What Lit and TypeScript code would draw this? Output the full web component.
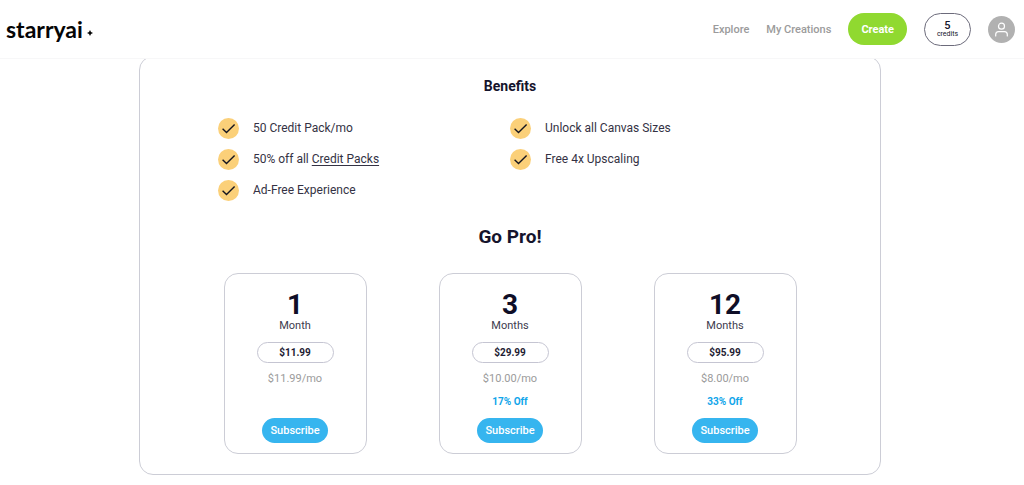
import { LitElement, html, css, svg, nothing } from "lit";
import { customElement, property } from "lit/decorators.js";

interface Plan {
  count: number;
  unit: string;
  price: string;
  monthly: string;
  discount?: string;
}

const plans: Plan[] = [
  { count: 1, unit: "Month", price: "$11.99", monthly: "$11.99/mo" },
  { count: 3, unit: "Months", price: "$29.99", monthly: "$10.00/mo", discount: "17% Off" },
  { count: 12, unit: "Months", price: "$95.99", monthly: "$8.00/mo", discount: "33% Off" },
];

const benefitColumns = [
  [html`50 Credit Pack/mo`, html`50% off all <a href="#credit-packs">Credit Packs</a>`, html`Ad-Free Experience`],
  [html`Unlock all Canvas Sizes`, html`Free 4x Upscaling`],
];

const checkIcon = html`<svg class="check" viewBox="0 0 21 21" aria-hidden="true">
  ${svg`<circle cx="10.5" cy="10.5" r="10.5" fill="#fbd079"/>
  <path d="M4.6 10.8 8.5 14.6 16.6 6.6" fill="none" stroke="#15151f" stroke-width="1.4"/>`}
</svg>`;

@customElement("site-header")
export class SiteHeader extends LitElement {
  static styles = css`
    :host {
      display: block;
      position: sticky;
      top: 0;
      z-index: 1;
    }
    .bar {
      display: flex;
      align-items: center;
      justify-content: space-between;
      height: 58px;
      padding: 0 9px 0 6px;
      background: #fff;
      border-bottom: 1px solid #f7f7f8;
    }
    .logo {
      display: flex;
      align-items: center;
      gap: 4px;
      color: #050505;
      font: 700 23px/28px Lato, sans-serif;
      text-decoration: none;
    }
    .spark {
      width: 6px;
      height: 6px;
      margin-top: 8px;
    }
    .nav {
      display: flex;
      align-items: center;
      gap: 17px;
    }
    .link {
      color: #9b9b9b;
      font-size: 11px;
      font-weight: 500;
      text-decoration: none;
    }
    .create {
      height: 32px;
      padding: 1px 13px 0;
      border: 0;
      border-radius: 16px;
      background: #90d930;
      color: #fff;
      font: 700 11px/16px Roboto, sans-serif;
    }
    .credits {
      display: flex;
      flex-direction: column;
      align-items: center;
      justify-content: center;
      box-sizing: border-box;
      width: 47px;
      height: 33px;
      padding: 0;
      border: 1px solid #6c6b7b;
      border-radius: 17px;
      background: #fff;
      color: #15142a;
      font: 500 11px/11px Roboto, sans-serif;
    }
    .unit {
      font-size: 7px;
      font-weight: 400;
      line-height: 7px;
    }
    .profile {
      width: 27px;
      height: 27px;
      padding: 0;
      border: 0;
      border-radius: 50%;
      background: none;
    }
    .avatar {
      display: block;
      width: 100%;
    }
  `;

  render() {
    return html`<header class="bar">
      <a class="logo" href="#home">starryai<svg class="spark" viewBox="0 0 6 6" aria-hidden="true"><path d="M3 0 4 2 6 3 4 4 3 6 2 4 0 3 2 2Z" fill="#050505"/></svg></a>
      <nav class="nav">
        <a class="link" href="#explore">Explore</a>
        <a class="link" href="#creations">My Creations</a>
        <button class="create" type="button">Create</button>
        <button class="credits" type="button">5<span class="unit">credits</span></button>
        <button class="profile" type="button" aria-label="Account">
          <svg class="avatar" viewBox="0 0 27 27" aria-hidden="true">
            <circle cx="13.5" cy="13.5" r="13.5" fill="#b1b1b1"/>
            <g fill="none" stroke="#fff" stroke-width="1.2" stroke-linecap="round">
              <circle cx="13.5" cy="10.2" r="3"/>
              <path d="M7.7 20V18.5Q7.7 15.6 10.6 15.6H16.4Q19.3 15.6 19.3 18.5V20"/>
            </g>
          </svg>
        </button>
      </nav>
    </header>`;
  }
}

@customElement("plan-card")
export class PlanCard extends LitElement {
  @property({ attribute: false }) plan!: Plan;

  static styles = css`
    :host {
      display: block;
    }
    .card {
      display: flex;
      flex-direction: column;
      align-items: center;
      box-sizing: border-box;
      height: 100%;
      padding: 17px 32px 10px;
      border: 1px solid #cccdd6;
      border-radius: 14px;
      font-size: 11px;
      line-height: 14px;
    }
    .count {
      margin: 0;
      color: #0f0e27;
      font-size: 28px;
      font-weight: 700;
      line-height: 28px;
    }
    .unit {
      margin-bottom: 9px;
      color: #3d3b4d;
    }
    .price {
      align-self: stretch;
      border: 1px solid #c5c5d2;
      border-radius: 11px;
      color: #1e1c33;
      font-size: 10px;
      font-weight: 700;
      line-height: 19px;
      text-align: center;
    }
    .monthly {
      margin-top: 9px;
      color: #9b9b9b;
    }
    .discount {
      min-height: 14px;
      margin: 9px 0;
      color: #10a5ea;
      font-size: 10px;
      font-weight: 700;
    }
    .subscribe {
      height: 25px;
      padding: 0 8px;
      border: 0;
      border-radius: 13px;
      background: #36b5ef;
      color: #fff;
      font: 500 11px/14px Roboto, sans-serif;
    }
  `;

  render() {
    const { count, unit, price, monthly, discount } = this.plan;
    return html`<article class="card">
      <h3 class="count">${count}</h3>
      <span class="unit">${unit}</span>
      <span class="price">${price}</span>
      <span class="monthly">${monthly}</span>
      <span class="discount">${discount ?? nothing}</span>
      <button class="subscribe" type="button">Subscribe</button>
    </article>`;
  }
}

@customElement("app-root")
export class AppRoot extends LitElement {
  static styles = css`
    :host {
      display: block;
      background: #fff;
      color: #343244;
      font-family: Roboto, sans-serif;
    }
    .page {
      margin-top: -3px;
      padding: 0 18px 10px 14px;
    }
    .panel {
      box-sizing: border-box;
      max-width: 742px;
      margin: 0 auto;
      padding: 20px 40px;
      border: 1px solid #cccdd6;
      border-radius: 14px;
    }
    .title,
    .offer {
      margin: 0;
      color: #15142c;
      font-weight: 700;
      text-align: center;
    }
    .title {
      font-size: 14px;
      line-height: 18px;
    }
    .offer {
      margin: 23px 0;
      font-size: 19px;
      line-height: 26px;
    }
    .benefits {
      display: grid;
      grid-template-columns: 1fr 1fr;
      max-width: 584px;
      margin: 23px auto 0;
    }
    .list {
      display: flex;
      flex-direction: column;
      gap: 10px;
      margin: 0;
      padding: 0;
      list-style: none;
    }
    .item {
      display: flex;
      gap: 14px;
      font-size: 12px;
      line-height: 20px;
    }
    .item a {
      color: inherit;
      text-underline-offset: 2px;
    }
    .check {
      flex: none;
      width: 21px;
      height: 21px;
    }
    .plans {
      display: grid;
      grid-template-columns: repeat(3, 1fr);
      gap: 72px;
      max-width: 573px;
      margin: 0 auto;
    }
  `;

  render() {
    return html`<site-header></site-header>
      <main class="page">
        <section class="panel">
          <h2 class="title">Benefits</h2>
          <div class="benefits">
            ${benefitColumns.map(
              (items) => html`<ul class="list">
                ${items.map((item) => html`<li class="item">${checkIcon}<span>${item}</span></li>`)}
              </ul>`
            )}
          </div>
          <h2 class="offer">Go Pro!</h2>
          <div class="plans">
            ${plans.map((plan) => html`<plan-card .plan=${plan}></plan-card>`)}
          </div>
        </section>
      </main>`;
  }
}
